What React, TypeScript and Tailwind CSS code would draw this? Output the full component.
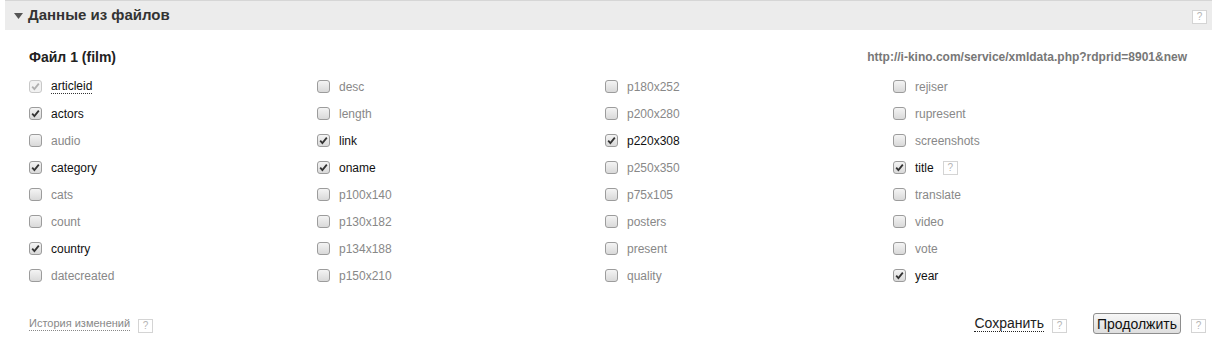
const columns: { name: string; checked?: boolean; disabled?: boolean; help?: boolean }[][] = [
  [
    { name: 'articleid', checked: true, disabled: true },
    { name: 'actors', checked: true },
    { name: 'audio' },
    { name: 'category', checked: true },
    { name: 'cats' },
    { name: 'count' },
    { name: 'country', checked: true },
    { name: 'datecreated' },
  ],
  [
    { name: 'desc' },
    { name: 'length' },
    { name: 'link', checked: true },
    { name: 'oname', checked: true },
    { name: 'p100x140' },
    { name: 'p130x182' },
    { name: 'p134x188' },
    { name: 'p150x210' },
  ],
  [
    { name: 'p180x252' },
    { name: 'p200x280' },
    { name: 'p220x308', checked: true },
    { name: 'p250x350' },
    { name: 'p75x105' },
    { name: 'posters' },
    { name: 'present' },
    { name: 'quality' },
  ],
  [
    { name: 'rejiser' },
    { name: 'rupresent' },
    { name: 'screenshots' },
    { name: 'title', checked: true, help: true },
    { name: 'translate' },
    { name: 'video' },
    { name: 'vote' },
    { name: 'year', checked: true },
  ],
];

function Help() {
  return (
    <span className="inline-flex h-[14px] w-[15px] items-center justify-center border border-[#d4d4d4] bg-white text-[10px] leading-none text-[#b5b5b5]">
      ?
    </span>
  );
}

function Check({ checked, disabled }: { checked?: boolean; disabled?: boolean }) {
  return (
    <span
      className={
        'flex h-[13px] w-[13px] shrink-0 items-center justify-center rounded-[3px] border ' +
        (disabled
          ? 'border-[#c8c8c8] bg-[#f2f2f2]'
          : 'border-[#9c9c9c] bg-gradient-to-b from-[#f4f4f4] to-[#d9d9d9]')
      }
    >
      {checked && (
        <svg width="9" height="9" viewBox="0 0 9 9">
          <path
            d="M1.2 4.6 L3.4 7 L7.8 1.6"
            fill="none"
            stroke={disabled ? '#b0b0b0' : '#333'}
            strokeWidth="1.8"
          />
        </svg>
      )}
    </span>
  );
}

export default function App() {
  return (
    <div className="h-[358px] w-[1219px] bg-white font-['Liberation_Sans',Arial,sans-serif]">
      <div className="ml-[5px] mr-[7px] flex h-[30px] items-center border-t border-[#d6d6d6] bg-[#ececec]">
        <svg width="9" height="6" viewBox="0 0 9 6" className="ml-[9px] mr-[5px]">
          <path d="M0 0 H9 L4.5 6 Z" fill="#555" />
        </svg>
        <span className="text-[15px] font-bold text-[#333]">Данные из файлов</span>
        <span className="ml-auto mr-[5px] -mt-[1px]">
          <Help />
        </span>
      </div>

      <div className="pl-[29px] pr-[32px]">
        <div className="mt-[17px] flex h-[20px] items-center justify-between">
          <span className="text-[14px] font-bold text-[#222]">Файл 1 (film)</span>
          <span className="text-[12px] font-bold text-[#777]">
            http://i-kino.com/service/xmldata.php?rdprid=8901&amp;new
          </span>
        </div>

        <div className="mt-[6px] grid grid-cols-[288px_288px_288px_288px]">
          {columns.map((col, ci) => (
            <div key={ci} className="flex flex-col">
              {col.map((f) => (
                <div key={f.name} className="flex h-[27px] items-center gap-[9px]">
                  <Check checked={f.checked} disabled={f.disabled} />
                  <span
                    className={
                      'text-[12px] ' +
                      (f.checked ? 'text-[#111]' : 'text-[#888]') +
                      (f.disabled ? ' border-b border-dotted border-[#333] leading-[13px]' : '')
                    }
                  >
                    {f.name}
                  </span>
                  {f.help && <Help />}
                </div>
              ))}
            </div>
          ))}
        </div>
      </div>

      <div className="mt-[24px] flex h-[21px] items-center pl-[29px] pr-[13px]">
        <span className="border-b border-dotted border-[#888] text-[11px] leading-[13px] text-[#888]">
          История изменений
        </span>
        <span className="ml-[8px]">
          <Help />
        </span>
        <span className="ml-auto border-b border-dotted border-[#222] text-[14px] leading-[16px] text-[#222]">
          Сохранить
        </span>
        <span className="ml-[8px]">
          <Help />
        </span>
        <button className="ml-[26px] h-[21px] w-[88px] rounded-[3px] border border-[#8e8e8e] bg-gradient-to-b from-[#f7f7f7] to-[#dedede] text-[14px] text-[#111]">
          Продолжить
        </button>
        <span className="ml-[10px]">
          <Help />
        </span>
      </div>
    </div>
  );
}
